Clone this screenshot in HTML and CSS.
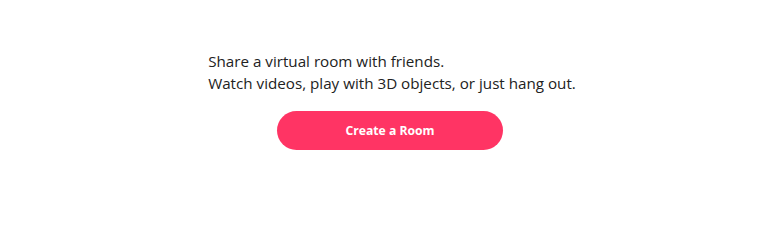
FILE: index.html
```html
<!DOCTYPE html>
<html>
<head>
<meta charset="utf-8">
<link rel="stylesheet" href="styles.css">
</head>
<body>
<main class="intro">
  <div class="tagline">
    <p>Share a virtual room with friends.</p>
    <p>Watch videos, play with 3D objects, or just hang out.</p>
  </div>
  <button class="create-btn">Create a Room</button>
</main>
</body>
</html>
```

FILE: styles.css
```css
html, body {
  margin: 0;
  padding: 0;
  background: #ffffff;
}
body {
  font-family: "Open Sans", "Noto Sans", sans-serif;
  color: #222222;
}
.intro {
  display: flex;
  flex-direction: column;
  align-items: center;
  padding-top: 50px;
}
.tagline {
  font-size: 15.2px;
  line-height: 22px;
}
.tagline p {
  margin: 0;
}
.create-btn {
  margin-top: 17px;
  margin-right: 4px;
  width: 226px;
  height: 39px;
  padding: 0;
  border: none;
  border-radius: 20px;
  background: #ff3464;
  color: #ffffff;
  font-family: "Open Sans", "Noto Sans", sans-serif;
  font-weight: 700;
  font-size: 12.2px;
  cursor: pointer;
}
```
